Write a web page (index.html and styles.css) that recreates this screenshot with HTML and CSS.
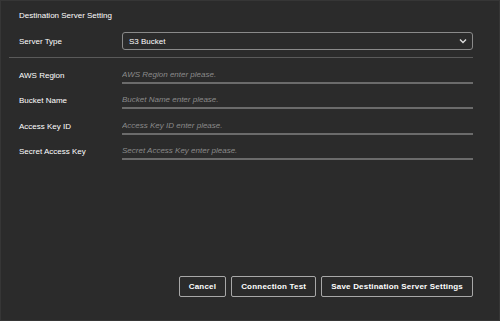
FILE: index.html
```html
<!DOCTYPE html>
<html lang="en">
<head>
  <meta charset="UTF-8">
  <title>Destination Server Setting</title>
  <link rel="stylesheet" href="styles.css">
</head>
<body>
  <div class="panel">
    <div class="title">Destination Server Setting</div>

    <div class="row type-row">
      <label>Server Type</label>
      <div class="select">
        <span>S3 Bucket</span>
        <svg width="8" height="6" viewBox="0 0 8 6"><path d="M1 1.5 L4 4.5 L7 1.5" fill="none" stroke="#ddd" stroke-width="1.4"/></svg>
      </div>
    </div>

    <div class="divider"></div>

    <div class="row field">
      <label>AWS Region</label>
      <input type="text" placeholder="AWS Region enter please.">
    </div>
    <div class="row field">
      <label>Bucket Name</label>
      <input type="text" placeholder="Bucket Name enter please.">
    </div>
    <div class="row field">
      <label>Access Key ID</label>
      <input type="text" placeholder="Access Key ID enter please.">
    </div>
    <div class="row field">
      <label>Secret Access Key</label>
      <input type="text" placeholder="Secret Access Key enter please.">
    </div>

    <div class="actions">
      <button>Cancel</button>
      <button>Connection Test</button>
      <button>Save Destination Server Settings</button>
    </div>
  </div>
</body>
</html>
```

FILE: styles.css
```css
* {
  box-sizing: border-box;
}

html, body {
  margin: 0;
  padding: 0;
  height: 100%;
}

body {
  background: #2b2b2b;
  font-family: 'Liberation Sans', Arial, sans-serif;
  font-size: 8px;
  color: #fff;
}

.panel {
  height: 321px;
  border: 1px solid #363636;
  padding: 9px 26px 0 8px;
  display: flex;
  flex-direction: column;
}

.title {
  padding-left: 10px;
  height: 11px;
  line-height: 11px;
}

.row {
  display: flex;
  align-items: center;
}

.row label {
  width: 113px;
  padding-left: 10px;
  flex-shrink: 0;
}

.type-row {
  margin-top: 11px;
}

.select {
  flex: 1;
  height: 18px;
  border: 1px solid #8a8a8a;
  border-radius: 3px;
  display: flex;
  align-items: center;
  justify-content: space-between;
  padding: 0 5px 0 6px;
  background: #2b2b2b;
}

.divider {
  height: 1px;
  background: #5a5a5a;
  margin-top: 7px;
  margin-bottom: 1px;
}

.field {
  height: 25.5px;
  align-items: flex-end;
}

.field label {
  padding-bottom: 5px;
}

.field input {
  flex: 1;
  background: transparent;
  border: none;
  border-bottom: 2px solid #6b6b6b;
  color: #fff;
  font-family: inherit;
  font-size: 8px;
  padding: 0 0 3px 0;
  margin-bottom: 1px;
  outline: none;
}

.field input::placeholder {
  color: #8a8a8a;
  font-style: italic;
}

.actions {
  margin-top: auto;
  margin-bottom: 23px;
  display: flex;
  justify-content: flex-end;
  gap: 5px;
}

.actions button {
  height: 21px;
  background: #2b2b2b;
  color: #fff;
  border: 1px solid #a8a8a8;
  border-radius: 2px;
  font-family: inherit;
  font-size: 8px;
  font-weight: bold;
  letter-spacing: 0.2px;
  padding: 0 9px;
  cursor: pointer;
}
```
